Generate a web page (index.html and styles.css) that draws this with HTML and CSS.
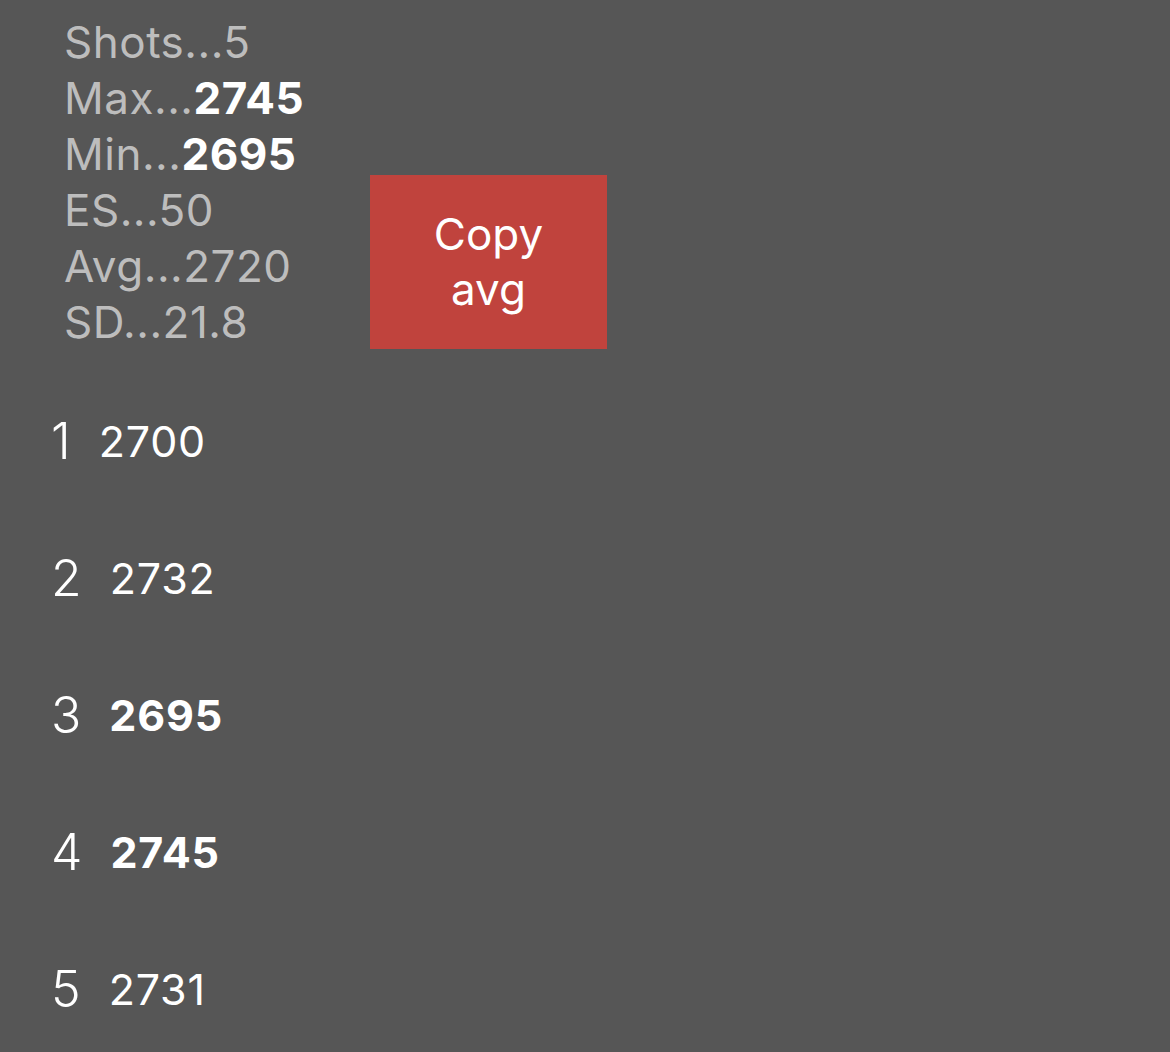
FILE: index.html
```html
<!DOCTYPE html>
<html>
<head>
<meta charset="utf-8">
<link rel="stylesheet" href="styles.css">
</head>
<body>
<div class="screen">
  <div class="top">
    <div class="stats">
      <div class="stat">Shots...5</div>
      <div class="stat">Max...<b>2745</b></div>
      <div class="stat">Min...<b>2695</b></div>
      <div class="stat">ES...50</div>
      <div class="stat">Avg...2720</div>
      <div class="stat">SD...21.8</div>
    </div>
    <div class="copy-btn">Copy<br>avg</div>
  </div>
  <div class="shots">
    <div class="row"><span class="idx">1</span><span class="val">2700</span></div>
    <div class="row"><span class="idx">2</span><span class="val">2732</span></div>
    <div class="row"><span class="idx">3</span><span class="val bold">2695</span></div>
    <div class="row"><span class="idx">4</span><span class="val bold">2745</span></div>
    <div class="row"><span class="idx">5</span><span class="val">2731</span></div>
  </div>
</div>
</body>
</html>
```
FILE: styles.css
```css
html, body {
  margin: 0;
  padding: 0;
  background: #565656;
}
body {
  font-family: Inter, "Noto Sans", sans-serif;
  font-variant-numeric: proportional-nums;
  color: #ffffff;
}
.screen {
  width: 1170px;
  height: 1052px;
  overflow: hidden;
}
.top {
  display: flex;
  align-items: flex-end;
  padding-top: 14px;
}
.stats {
  width: 306px;
  padding-left: 64px;
}
.stat {
  font-size: 44px;
  line-height: 56px;
  height: 56px;
  color: #bdbdbd;
  letter-spacing: 0.5px;
}
.stat b {
  color: #ffffff;
  font-weight: 700;
}
.copy-btn {
  width: 237px;
  height: 174px;
  margin-bottom: 1px;
  background: #c0433d;
  color: #ffffff;
  font-size: 44px;
  line-height: 55px;
  display: flex;
  align-items: center;
  justify-content: center;
  text-align: center;
}
.shots {
  margin-top: 22px;
  padding-left: 51px;
}
.row {
  height: 137px;
  display: flex;
  align-items: center;
  gap: 28px;
}
.idx {
  font-size: 50px;
  font-weight: 300;
}
.val {
  font-size: 43px;
  letter-spacing: 0.8px;
}
.val.bold {
  font-weight: 700;
}
```
